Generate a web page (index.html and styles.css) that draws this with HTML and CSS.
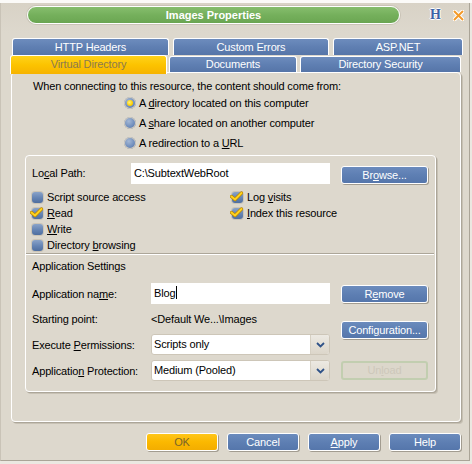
FILE: index.html
```html
<!DOCTYPE html>
<html>
<head>
<meta charset="utf-8">
<title>Images Properties</title>
<link rel="stylesheet" href="styles.css">
</head>
<body>
<div class="topstrip"></div>
<div class="window">
  <div class="titlebar">
    <div class="title">Images Properties</div>
    <span class="help-h">H</span>
    <svg class="close-x" width="11" height="11" viewBox="0 0 11 11">
      <path d="M1.5 1.5 L9.5 9.5 M9.5 1.5 L1.5 9.5" stroke="#ffffff" stroke-width="4" stroke-linecap="round"/>
      <path d="M1.5 1.5 L9.5 9.5 M9.5 1.5 L1.5 9.5" stroke="#f39a2a" stroke-width="2" stroke-linecap="round"/>
    </svg>
  </div>

  <div class="tabs">
    <div class="tabrow back">
      <div class="tab t-http">HTTP Headers</div>
      <div class="tab t-custom">Custom Errors</div>
      <div class="tab t-asp">ASP.NET</div>
    </div>
    <div class="tabrow front">
      <div class="tab sel t-vdir">Virtual Directory</div>
      <div class="tab t-docs">Documents</div>
      <div class="tab t-dsec">Directory Security</div>
    </div>
  </div>

  <div class="panel">
    <p class="intro">When connecting to this resource, the content should come from:</p>
    <div class="radios">
      <div class="radio"><span class="rb on"></span><span>A <u>d</u>irectory located on this computer</span></div>
      <div class="radio"><span class="rb"></span><span>A <u>s</u>hare located on another computer</span></div>
      <div class="radio"><span class="rb"></span><span>A redirection to a <u>U</u>RL</span></div>
    </div>

    <div class="group">
      <div class="pathrow">
        <span class="pathlabel">Lo<u>c</u>al Path:</span>
        <div class="field path">C:\SubtextWebRoot</div>
        <div class="btn browse">Br<u>o</u>wse...</div>
      </div>

      <div class="checks">
        <div class="check"><span class="cb"></span><span>Script source access</span></div>
        <div class="check"><span class="cb"><svg class="tick" width="13" height="11" viewBox="0 0 13 11"><path d="M1.5 5.5 L5 8.5 L11.5 2" fill="none" stroke="#b88400" stroke-width="3.4" stroke-linejoin="round" stroke-linecap="round"/><path d="M1.5 5.5 L5 8.5 L11.5 2" fill="none" stroke="#ffd21e" stroke-width="2" stroke-linejoin="round" stroke-linecap="round"/></svg></span><span>Log <u>v</u>isits</span></div>
        <div class="check"><span class="cb"><svg class="tick" width="13" height="11" viewBox="0 0 13 11"><path d="M1.5 5.5 L5 8.5 L11.5 2" fill="none" stroke="#b88400" stroke-width="3.4" stroke-linejoin="round" stroke-linecap="round"/><path d="M1.5 5.5 L5 8.5 L11.5 2" fill="none" stroke="#ffd21e" stroke-width="2" stroke-linejoin="round" stroke-linecap="round"/></svg></span><span><u>R</u>ead</span></div>
        <div class="check"><span class="cb"><svg class="tick" width="13" height="11" viewBox="0 0 13 11"><path d="M1.5 5.5 L5 8.5 L11.5 2" fill="none" stroke="#b88400" stroke-width="3.4" stroke-linejoin="round" stroke-linecap="round"/><path d="M1.5 5.5 L5 8.5 L11.5 2" fill="none" stroke="#ffd21e" stroke-width="2" stroke-linejoin="round" stroke-linecap="round"/></svg></span><span><u>I</u>ndex this resource</span></div>
        <div class="check"><span class="cb"></span><span><u>W</u>rite</span></div>
        <div class="check"></div>
        <div class="check"><span class="cb"></span><span>Directory <u>b</u>rowsing</span></div>
      </div>

      <div class="sep"></div>
      <div class="sectitle">Application Settings</div>

      <div class="appsettings">
        <div class="appfields">
          <div class="frow r-name">
            <span class="flabel">Application na<u>m</u>e:</span>
            <div class="field name">Blog<span class="caret"></span></div>
          </div>
          <div class="frow r-start">
            <span class="flabel">Starting point:</span>
            <span class="fvalue">&lt;Default We...\Images</span>
          </div>
          <div class="frow r-exec">
            <span class="flabel">Execute <u>P</u>ermissions:</span>
            <div class="select"><span class="seltext">Scripts only</span><span class="selarrow"><svg width="9" height="6" viewBox="0 0 9 6"><path d="M1 1 L4.5 4.5 L8 1" fill="none" stroke="#2f5288" stroke-width="1.8"/></svg></span></div>
          </div>
          <div class="frow r-prot">
            <span class="flabel">Applicatio<u>n</u> Protection:</span>
            <div class="select"><span class="seltext">Medium (Pooled)</span><span class="selarrow"><svg width="9" height="6" viewBox="0 0 9 6"><path d="M1 1 L4.5 4.5 L8 1" fill="none" stroke="#2f5288" stroke-width="1.8"/></svg></span></div>
          </div>
        </div>
        <div class="appbuttons">
          <div class="btn remove">R<u>e</u>move</div>
          <div class="btn config">Confi<u>g</u>uration...</div>
          <div class="btn disabled unload">Un<u>l</u>oad</div>
        </div>
      </div>
    </div>
  </div>

  <div class="footer">
    <div class="btn ok">OK</div>
    <div class="btn">Cancel</div>
    <div class="btn"><u>A</u>pply</div>
    <div class="btn">Help</div>
  </div>
</div>
</body>
</html>
```

FILE: styles.css
```css
* { box-sizing: border-box; }

html, body {
  margin: 0;
  padding: 0;
}

body {
  width: 472px;
  height: 464px;
  background: #ebe8e1;
  font-family: "Liberation Sans", Arial, sans-serif;
  font-size: 11px;
  letter-spacing: -0.15px;
  color: #000;
  overflow: hidden;
}

u { text-decoration: underline; text-underline-offset: 1px; }

.topstrip {
  height: 3px;
  background: #fbfaf8;
}

.window {
  width: 470px;
  height: 458px;
  background: linear-gradient(180deg, #d8d2c6 0%, #ddd8cd 30px, #ddd8cd 100%);
  border-right: 1px solid #aaa497;
  border-bottom: 1px solid #aaa497;
  border-left: 1px solid #c9c3b7;
  display: flex;
  flex-direction: column;
}

/* title bar */
.titlebar {
  display: flex;
  align-items: center;
  height: 18px;
  margin-top: 3px;
}

.title {
  margin-left: 26px;
  width: 373px;
  height: 18px;
  border: 1px solid #ffffff;
  border-radius: 9px;
  background: linear-gradient(180deg, #86bd6d 0%, #75b05c 50%, #6aa551 100%);
  color: #ffffff;
  font-weight: bold;
  font-size: 11px;
  letter-spacing: 0;
  line-height: 16px;
  text-align: center;
  box-shadow: 0 0 0 1px #c9c3b6;
}

.help-h {
  margin-left: 30px;
  font-family: "Liberation Serif", "Times New Roman", serif;
  font-weight: bold;
  font-size: 14px;
  line-height: 14px;
  letter-spacing: 0;
  color: #3b63a6;
  text-shadow: 1px 0 0 #fff, -1px 0 0 #fff, 0 1px 0 #fff, 0 -1px 0 #fff;
}

.close-x {
  margin-left: 12px;
  margin-top: 1px;
}

/* tabs */
.tabs {
  margin-top: 14px;
  display: flex;
  flex-direction: column;
}

.tabrow {
  display: flex;
}

.tabrow.back {
  padding-left: 11px;
  gap: 4px;
  height: 17px;
}

.tabrow.front {
  padding-left: 9px;
  height: 17px;
  align-items: flex-end;
}

.tab {
  height: 17px;
  border: 1px solid #ffffff;
  border-bottom: none;
  border-radius: 3px 3px 0 0;
  background: linear-gradient(180deg, #6d8cbd 0%, #5f7fb2 50%, #5675a8 100%);
  color: #ffffff;
  text-align: center;
  line-height: 16px;
  font-size: 11px;
}

.t-http { width: 157px; }
.t-custom { width: 156px; }
.t-asp { width: 130px; }

.t-vdir {
  width: 157px;
  height: 19px;
  position: relative;
  z-index: 2;
  margin-bottom: -2px;
  line-height: 17px;
}
.t-docs { width: 128px; height: 16px; margin-left: 2px; line-height: 15px; }
.t-dsec { width: 161px; height: 16px; margin-left: 3px; line-height: 15px; }

.tab.sel {
  background: linear-gradient(180deg, #ffd21a 0%, #fcc300 50%, #f6b300 100%);
  color: #8b7a4e;
}

/* main panel */
.panel {
  margin-left: 10px;
  width: 450px;
  height: 350px;
  border: 1px solid #ffffff;
  border-radius: 4px;
  box-shadow: 1px 1px 0 #aca699, 2px 2px 0 #c7c1b4;
  padding: 6px 0 0 0;
  display: flex;
  flex-direction: column;
}

.intro {
  margin: 0 0 0 21px;
  line-height: 14px;
  height: 14px;
}

.radios {
  margin-left: 112px;
  display: flex;
  flex-direction: column;
}

.radio {
  height: 20px;
  display: flex;
  align-items: center;
  white-space: nowrap;
}

.rb {
  width: 12px;
  height: 12px;
  border-radius: 50%;
  background: radial-gradient(circle at 40% 35%, #a4b8d6 0%, #6e8cbb 55%, #48679a 100%);
  box-shadow: 0 0 0 1px #d2cbbd inset;
  margin-right: 3px;
  position: relative;
  flex: none;
}

.rb.on::after {
  content: "";
  position: absolute;
  left: 3px;
  top: 3px;
  width: 6px;
  height: 6px;
  border-radius: 50%;
  background: radial-gradient(circle at 40% 40%, #fff27a 0%, #ffd000 60%, #e2a800 100%);
}

/* group box */
.group {
  margin: 2px 0 0 13px;
  width: 411px;
  height: 237px;
  border: 1px solid #ffffff;
  border-radius: 4px;
  box-shadow: 1px 1px 0 #aca699, 2px 2px 0 #c7c1b4;
  padding: 7px 0 0 6px;
  display: flex;
  flex-direction: column;
}

.pathrow {
  display: flex;
  align-items: flex-start;
  height: 21px;
}

.pathlabel {
  width: 99px;
  line-height: 21px;
}

.field {
  background: #ffffff;
  height: 21px;
  line-height: 21px;
  padding-left: 3px;
  white-space: nowrap;
}

.field.path { width: 199px; }
.field.name { width: 179px; }

.caret {
  display: inline-block;
  width: 1px;
  height: 13px;
  background: #000;
  vertical-align: -2px;
  margin-left: 1px;
}

.btn {
  width: 72px;
  height: 18px;
  border: 1px solid #ffffff;
  border-radius: 3px;
  background: linear-gradient(180deg, #6b8bbd 0%, #5e7fb3 50%, #5576ab 100%);
  color: #ffffff;
  text-align: center;
  line-height: 16px;
  font-size: 11px;
  box-shadow: 1px 1px 0 #a29c90;
  white-space: nowrap;
}

.browse {
  width: 87px;
  margin-left: 11px;
  margin-top: 3px;
}

.checks {
  margin-top: 5px;
  display: grid;
  grid-template-columns: 200px 190px;
  grid-auto-rows: 16px;
}

.check {
  display: flex;
  align-items: center;
  white-space: nowrap;
}

.cb {
  width: 11px;
  height: 11px;
  border-radius: 3px;
  background: linear-gradient(180deg, #8aa3c8 0%, #6483b3 55%, #4f6e9f 100%);
  box-shadow: 0 0 0 1px #cbc4b6;
  margin-right: 4px;
  position: relative;
  flex: none;
}

.tick {
  position: absolute;
  left: -2px;
  top: -1px;
}

.sep {
  margin: 0 0 0 -6px;
  width: 408px;
  height: 2px;
  border-top: 1px solid #aca699;
  border-bottom: 1px solid #ffffff;
}

.sectitle {
  margin-top: 4px;
  line-height: 14px;
  height: 14px;
}

.appsettings {
  margin-top: 10px;
  display: flex;
}

.appfields {
  width: 298px;
  display: flex;
  flex-direction: column;
}

.frow {
  display: flex;
  align-items: center;
}

.flabel {
  width: 119px;
  white-space: nowrap;
}

.r-name { height: 21px; }
.r-start { height: 14px; margin-top: 8px; }
.r-exec { height: 21px; margin-top: 8px; }
.r-prot { height: 21px; margin-top: 5px; }

.fvalue { white-space: nowrap; }

.select {
  width: 179px;
  height: 21px;
  border: 1px solid #cdc6b8;
  border-radius: 3px;
  background: #ffffff;
  display: flex;
}

.seltext {
  flex: 1;
  padding-left: 2px;
  line-height: 19px;
}

.selarrow {
  width: 19px;
  background: linear-gradient(180deg, #ece9e2 0%, #dcd6ca 100%);
  border-left: 1px solid #d6d0c3;
  border-radius: 0 2px 2px 0;
  display: flex;
  align-items: center;
  justify-content: center;
}

.appbuttons {
  margin-left: 11px;
  display: flex;
  flex-direction: column;
}

.remove { width: 87px; margin-top: 2px; }
.config { width: 87px; margin-top: 18px; }
.unload { width: 87px; margin-top: 22px; height: 19px; }

.btn.disabled {
  background: #dcd7cb;
  border: 2px solid #c2ceb0;
  color: #cdc7ba;
  box-shadow: none;
  line-height: 15px;
}

/* footer */
.footer {
  margin-top: 11px;
  display: flex;
  justify-content: flex-end;
  gap: 9px;
  padding-right: 8px;
}

.btn.ok {
  background: linear-gradient(180deg, #ffc61a 0%, #fbb800 50%, #f3ad00 100%);
  color: #7a6428;
}
```
